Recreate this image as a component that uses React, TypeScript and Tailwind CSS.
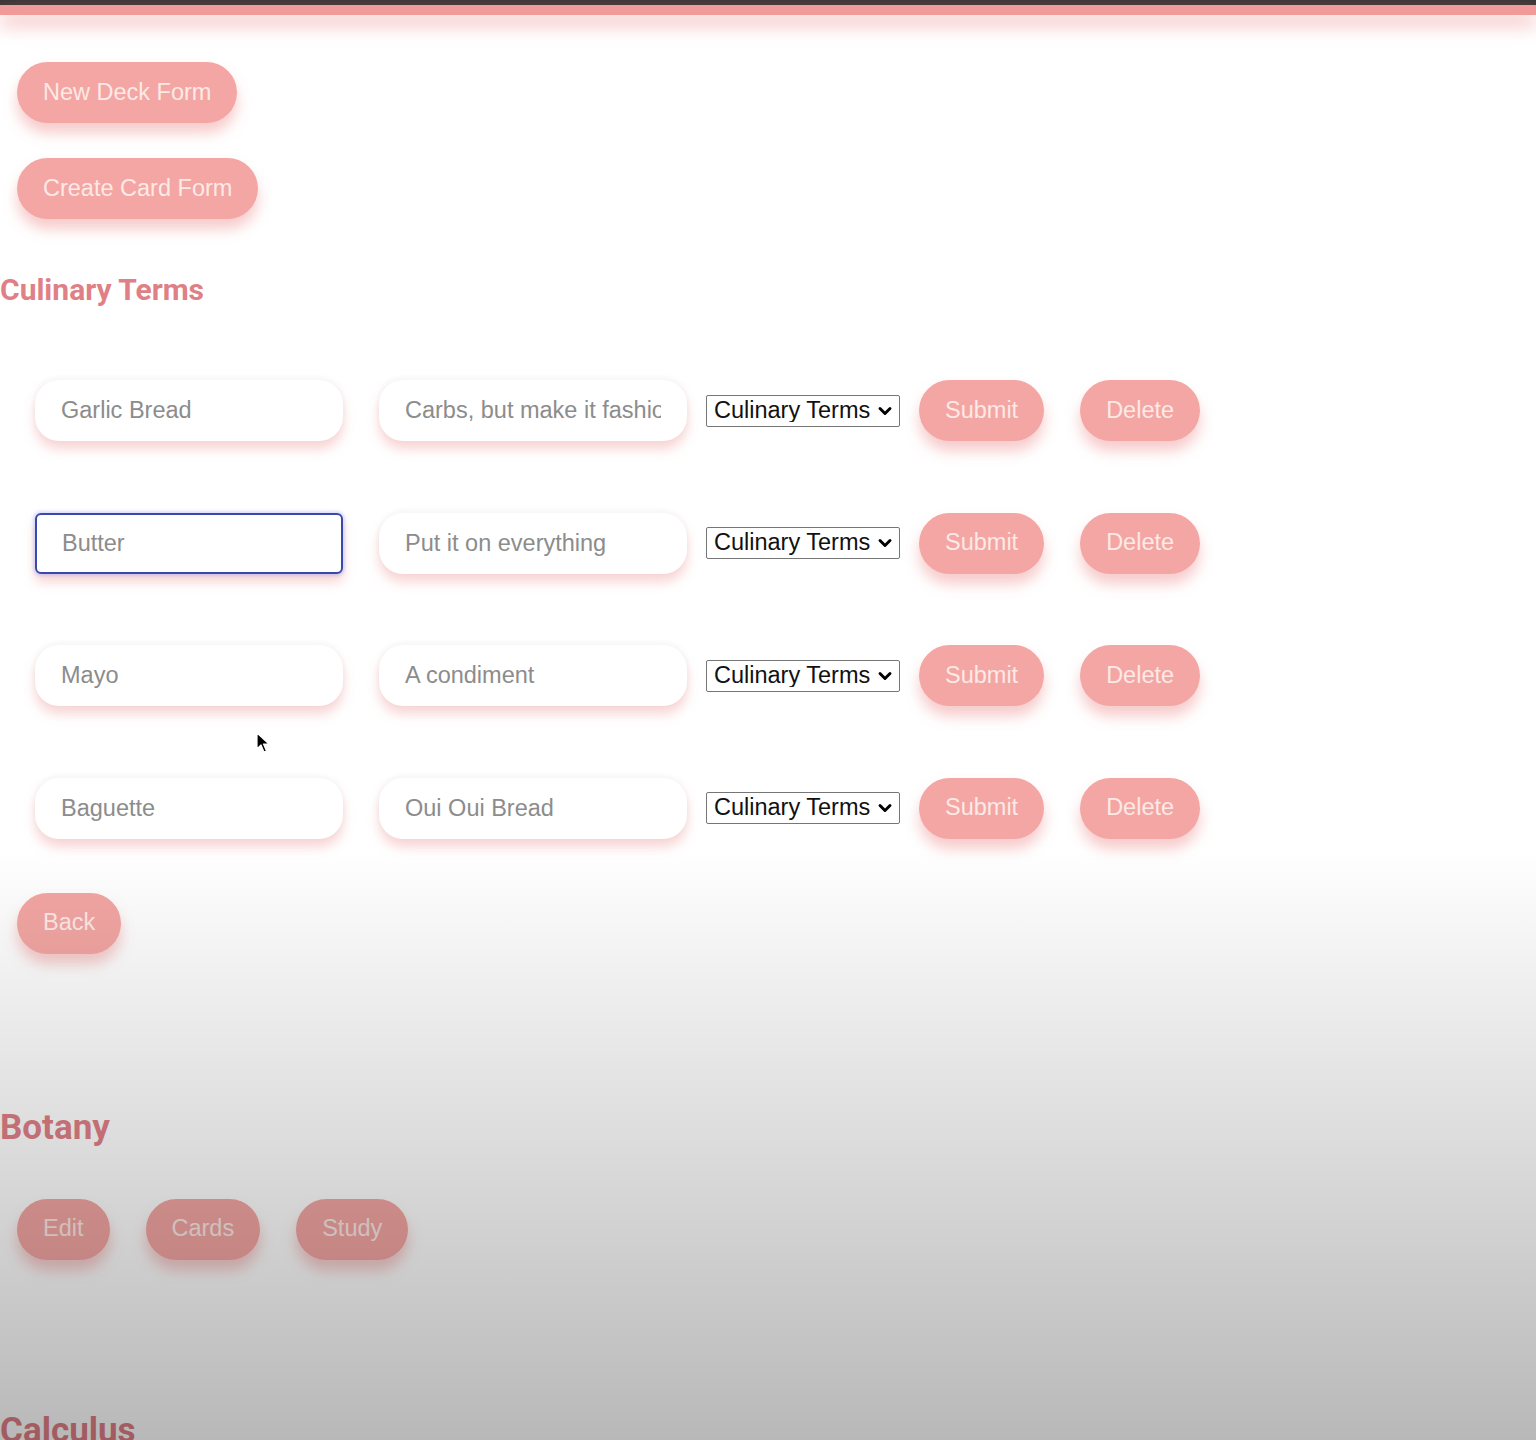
import { ChevronDown } from "lucide-react";

const cards = [
  { term: "Garlic Bread", definition: "Carbs, but make it fashionable" },
  { term: "Butter", definition: "Put it on everything", focused: true },
  { term: "Mayo", definition: "A condiment" },
  { term: "Baguette", definition: "Oui Oui Bread" },
];

const pill =
  "h-[61px] rounded-full bg-[#f3a6a3] px-[26px] text-[23.5px] leading-none text-[#fde9e6] shadow-[0_10px_14px_rgba(238,140,140,0.45)] whitespace-nowrap";

const field =
  "h-[61px] w-[308px] bg-white text-[23.5px] outline-none placeholder:text-[#8c8c8c]";

function CardRow({
  term,
  definition,
  focused,
}: {
  term: string;
  definition: string;
  focused?: boolean;
}) {
  return (
    <div className="flex items-center">
      <input
        placeholder={term}
        className={
          focused
            ? `${field} ml-[35px] rounded-[6px] border-2 border-[#3a4aa8] px-[25px] shadow-[0_0_3px_2px_rgba(120,130,255,0.25),0_8px_12px_rgba(240,160,160,0.45)]`
            : `${field} ml-[35px] rounded-[24px] px-[26px] shadow-[0_-2px_6px_rgba(0,0,0,0.04),0_8px_12px_rgba(240,160,160,0.45)]`
        }
      />
      <input
        placeholder={definition}
        className={`${field} ml-[36px] rounded-[24px] px-[26px] shadow-[0_-2px_6px_rgba(0,0,0,0.04),0_8px_12px_rgba(240,160,160,0.45)]`}
      />
      <div className="relative ml-[19px]">
        <select className="h-[32px] w-[194px] appearance-none rounded-[2px] border border-[#767676] bg-white pl-[7px] text-[23.5px] leading-none text-[#111] outline-none">
          <option>Culinary Terms</option>
          <option>Botany</option>
          <option>Calculus</option>
        </select>
        <ChevronDown
          size={20}
          strokeWidth={3.5}
          className="pointer-events-none absolute right-[5px] top-[6px] text-black"
        />
      </div>
      <button className={`${pill} ml-[19px]`}>Submit</button>
      <button className={`${pill} ml-[36px]`}>Delete</button>
    </div>
  );
}

export default function App() {
  return (
    <div className="relative min-h-[1440px] overflow-hidden bg-white font-['Liberation_Sans',Arial,sans-serif]">
      {/* Top bar */}
      <div className="h-[5px] bg-[#3a3536]" />
      <div className="h-[10px] bg-[#f09a9a] shadow-[0_10px_18px_rgba(240,150,150,0.7)]" />

      <div className="flex flex-col items-start">
        <button className={`${pill} ml-[17px] mt-[47px]`}>New Deck Form</button>
        <button className={`${pill} ml-[17px] mt-[35px]`}>Create Card Form</button>

        <h2 className="mt-[53px] font-['Roboto',sans-serif] text-[30px] font-bold leading-[36px] text-[#df7f86]">
          Culinary Terms
        </h2>

        <div className="mt-[72px] flex flex-col gap-[71.5px]">
          {cards.map((c) => (
            <CardRow key={c.term} {...c} />
          ))}
        </div>

        <button className={`${pill} ml-[17px] mt-[54px]`}>Back</button>

        <h2 className="mt-[153px] font-['Roboto',sans-serif] text-[35px] font-bold leading-[42px] text-[#df7f86]">
          Botany
        </h2>
        <div className="mt-[50px] flex gap-[36px] pl-[17px]">
          <button className={pill}>Edit</button>
          <button className={pill}>Cards</button>
          <button className={pill}>Study</button>
        </div>

        <h2 className="mt-[150px] font-['Roboto',sans-serif] text-[35px] font-bold leading-[42px] text-[#df7f86]">
          Calculus
        </h2>
      </div>

      {/* mouse pointer */}
      <svg
        className="pointer-events-none absolute left-[256px] top-[732px]"
        width="14"
        height="22"
        viewBox="0 0 14 22"
      >
        <path
          d="M1 1 L1 17 L5 13 L8 20 L10.5 19 L7.5 12 L13 12 Z"
          fill="black"
          stroke="white"
          strokeWidth="1.2"
          strokeLinejoin="round"
        />
      </svg>

      {/* bottom fade */}
      <div className="pointer-events-none absolute left-0 top-0 h-[1440px] w-full bg-[linear-gradient(to_bottom,rgba(0,0,0,0)_0px,rgba(0,0,0,0)_850px,rgba(0,0,0,0.28)_1440px)]" />
    </div>
  );
}
